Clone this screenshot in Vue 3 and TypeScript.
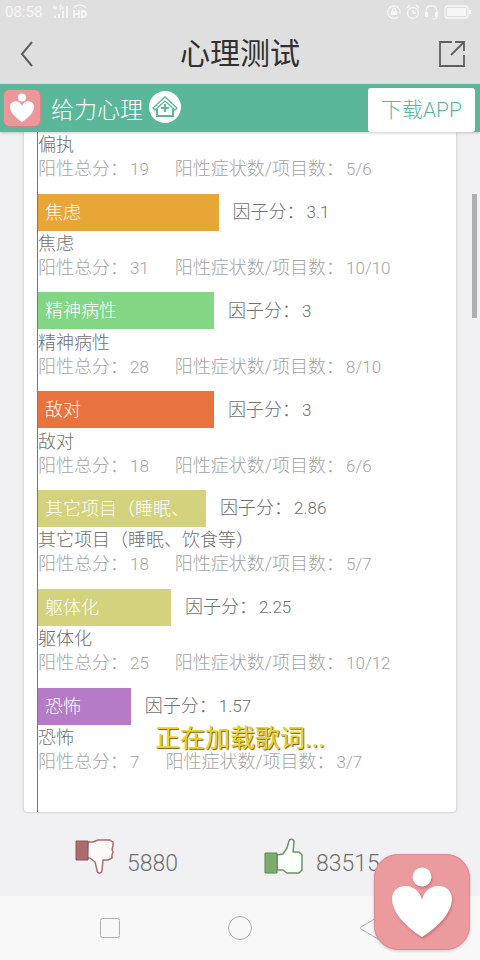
<script setup lang="ts">
interface Factor {
  name: string
  score: string
  total: number
  ratio: string
  color: string
  width: number
}

const factors: Factor[] = [
  { name: '焦虑', score: '3.1', total: 31, ratio: '10/10', color: '#e8a637', width: 43.2 },
  { name: '精神病性', score: '3', total: 28, ratio: '8/10', color: '#83d784', width: 42.1 },
  { name: '敌对', score: '3', total: 18, ratio: '6/6', color: '#e9733e', width: 42.1 },
  { name: '其它项目（睡眠、饮食等）', score: '2.86', total: 18, ratio: '5/7', color: '#d2d37c', width: 40.2 },
  { name: '躯体化', score: '2.25', total: 25, ratio: '10/12', color: '#d2d37c', width: 31.8 },
  { name: '恐怖', score: '1.57', total: 7, ratio: '3/7', color: '#b67bc7', width: 22.2 },
]
</script>

<template>
  <div class="page">
    <div class="status">
      <span class="clock">08:58</span>
      <svg class="signal" width="36" height="16" viewBox="0 0 36 16" aria-hidden="true">
        <g fill="none" stroke="#f6f6f6" stroke-width="1">
          <path d="M3 1L1 4h4M4 2v4M10 1H8v4h3V3H9" />
        </g>
        <path d="M2 12h2v2H2zM6 10h2v4H6zM10 7h2v7h-2zM14 2h2v12h-2z" fill="#f6f6f6" />
        <g fill="none" stroke="#f6f6f6" stroke-width="1.8">
          <path d="M22 6v8M27 6v8M22 10h5M30 7v6h1c4 0 4-6 0-6z" />
          <path d="M22 4c2-4 9-4 12 0" stroke-width="1.2" />
        </g>
      </svg>
      <svg class="system" width="86" height="16" viewBox="0 0 86 16" aria-hidden="true">
        <g fill="none" stroke="#f6f6f6" stroke-width="1.3">
          <path d="M12 13a6.3 6.3 0 1 1 2-3M6.5 7V6c0-2.500 3-2.500 3 0v1" />
          <circle cx="27" cy="9" r="5.500" />
          <path d="M27 6v3h3M21 4l3-3M33 4l-3-3" />
          <path d="M40 12V7c0-7 11-7 11 0v5c0 2-2 3-4 3" />
          <rect x="59" y="2" width="23" height="12" rx="3" />
        </g>
        <path d="M5 7h6v4H5zM39 8h3v5h-3zM49 8h3v5h-3zM61 4h19v8H61zM83 6h2v4h-2z" fill="#f6f6f6" />
      </svg>
    </div>

    <header class="titlebar">
      <button class="plain" type="button" aria-label="返回">
        <svg width="14" height="28" viewBox="0 0 14 28"><path d="M12 2L2 14l10 12" fill="none" stroke="#606060" stroke-width="2" /></svg>
      </button>
      <h1>心理测试</h1>
      <button class="plain" type="button" aria-label="分享">
        <svg width="28" height="28" viewBox="0 0 28 28"><path d="M14 2H2v24h24V15M13 15L26 2M17 2h9v9" fill="none" stroke="#606060" stroke-width="1.8" /></svg>
      </button>
    </header>

    <div class="banner">
      <svg width="38" height="40" viewBox="0 0 38 40" aria-hidden="true">
        <rect x="0.5" y="1.5" width="37" height="37" rx="6" fill="#eb989b" stroke="#cf8385" stroke-width="1" />
        <circle cx="19" cy="9.500" r="4" fill="#fff" />
        <path d="M19 34C11 29 7 23 7 19c0-7 10-8 12-1 2-7 12-6 12 1 0 4-4 10-12 15z" fill="#fff" />
      </svg>
      <span class="brand">给力心理</span>
      <svg class="home" width="34" height="34" viewBox="0 0 34 34" aria-hidden="true">
        <circle cx="17" cy="16" r="16" fill="#fff" />
        <g fill="none" stroke="#5bb79a" stroke-width="2">
          <path d="M5 17L17 6l12 11-2 2-10-9-10 9z" stroke-width="1.300" />
          <path d="M9 18v7h16v-7M17 13v8M13 17h8" />
        </g>
      </svg>
      <a class="download" href="#">下载APP</a>
    </div>

    <main class="card">
      <div class="chart">
        <section class="item lead">
          <p class="name">偏执</p>
          <p class="stats">
            <span>阳性总分：<span class="value">19</span></span>
            <span>阳性症状数/项目数：<span class="value">5/6</span></span>
          </p>
        </section>
        <section v-for="f in factors" :key="f.name" class="item">
          <div class="row">
            <div class="bar" :style="{ width: f.width + '%', background: f.color }">{{ f.name }}</div>
            <span class="score">因子分：<span class="value">{{ f.score }}</span></span>
          </div>
          <p class="name">{{ f.name }}</p>
          <p class="stats">
            <span>阳性总分：<span class="value">{{ f.total }}</span></span>
            <span>阳性症状数/项目数：<span class="value">{{ f.ratio }}</span></span>
          </p>
        </section>
      </div>
    </main>

    <div class="votes">
      <button class="plain vote" type="button" aria-label="踩 5880">
        <svg width="40" height="38" viewBox="0 0 40 38">
          <path d="M13 4h5l5-2h12l3 2v4l-1 3 1 3-1 3v3l-4 2h-5l-1 10c0 4-5 4-5 0l-2-8-5-4h-3z" fill="#fffafa" stroke="#a77073" stroke-width="1.500" stroke-linejoin="round" />
          <path d="M1 3h12v19H1z" fill="#aa6b6e" stroke="#8e5558" />
        </svg>
        <span>5880</span>
      </button>
      <button class="plain vote" type="button" aria-label="赞 83515">
        <svg width="40" height="38" viewBox="0 0 40 38">
          <path d="M13 17l6-1 4-6 2-7c1-3 5-2 5 1l-1 10h6l3 3v15l-3 3H23l-4-3h-6z" fill="#fafffa" stroke="#6b9566" stroke-width="1.500" stroke-linejoin="round" />
          <path d="M1 15h12v20H1z" fill="#7cad6d" stroke="#568650" />
        </svg>
        <span>83515</span>
      </button>
    </div>

    <nav class="navbar">
      <button class="plain" type="button" aria-label="最近任务">
        <svg width="24" height="24" viewBox="0 0 24 24"><rect x="2.500" y="2.500" width="19" height="19" rx="2" fill="none" stroke="#b0b0b0" /></svg>
      </button>
      <button class="plain" type="button" aria-label="主页">
        <svg width="26" height="26" viewBox="0 0 26 26"><circle cx="13" cy="13" r="11.500" fill="none" stroke="#b0b0b0" /></svg>
      </button>
      <button class="plain" type="button" aria-label="后退">
        <svg width="24" height="26" viewBox="0 0 24 26"><path d="M3 12L20 2q2-1 2 1v20q0 2-2 1L3 14q-2-1 0-2z" fill="none" stroke="#b0b0b0" /></svg>
      </button>
    </nav>

    <div class="thumb"></div>
    <div class="toast" role="status">正在加载歌词...</div>
    <button class="plain float" type="button" aria-label="给力心理">
      <svg width="96" height="96" viewBox="0 0 96 96">
        <rect width="96" height="96" rx="24" fill="#eb9a9e" />
        <rect x="0.500" y="0.500" width="95" height="95" rx="24" fill="none" stroke="#d98d91" />
        <g class="figure" fill="#fff">
          <circle cx="48" cy="23" r="9.500" />
          <path d="M48 83C29 71 18 57 18 45c0-17 26-18 30 1 4-19 30-18 30-1 0 12-11 26-30 38z" />
        </g>
      </svg>
    </button>
  </div>
</template>

<style>
body {
  margin: 0;
  background: #f1f1f3;
}
</style>

<style scoped>
.page {
  position: relative;
  display: flex;
  flex-direction: column;
  min-height: 100vh;
  overflow: hidden;
  background: #f1f1f3;
  color: #707070;
  font-family: Roboto, "Noto Sans CJK SC", sans-serif;
  font-size: 18px;
  font-weight: 300;
}
.plain {
  padding: 0;
  border: 0;
  background: none;
  color: inherit;
  font: inherit;
  cursor: pointer;
}
svg {
  display: block;
}
.status {
  display: flex;
  align-items: center;
  height: 24px;
  padding: 0 8px 0 5px;
  background: #dfdfdf;
}
.clock {
  color: #f6f6f6;
  font-size: 15px;
  font-weight: 400;
}
.signal {
  margin-left: 10px;
}
.system {
  margin-left: auto;
}
.titlebar {
  display: flex;
  align-items: center;
  justify-content: space-between;
  height: 60px;
  padding: 0 14px 0 20px;
  background: #dfdfdf;
}
h1 {
  margin: 0;
  padding-left: 8px;
  color: #303030;
  font-size: 30px;
  font-weight: 400;
  line-height: 60px;
}
.banner {
  position: relative;
  z-index: 1;
  display: flex;
  align-items: center;
  height: 48px;
  padding: 0 5px 0 3px;
  background: #5bb79a;
  box-shadow: 0 1px 3px rgba(0, 0, 0, 0.2);
}
.brand {
  margin-left: 10px;
  padding-top: 6px;
  color: #fff;
  font-size: 23px;
  line-height: 32px;
}
.home {
  margin-left: 5px;
}
.download {
  align-self: flex-end;
  margin: 0 0 0 auto;
  padding: 0 13px;
  border-radius: 3px;
  background: #fff;
  color: #5bb79a;
  font-size: 21px;
  line-height: 44px;
  text-decoration: none;
}
.card {
  display: flex;
  flex: 1;
  margin: 0 24px;
  padding-left: 13px;
  border-radius: 0 0 3px 3px;
  background: #fff;
  box-shadow: 0 0 3px rgba(0, 0, 0, 0.25);
}
.chart {
  display: flex;
  flex: 1;
  flex-direction: column;
  padding-bottom: 26px;
  border-left: 1px solid #777;
}
.item {
  flex: 1;
}
.lead {
  flex: none;
  padding-bottom: 12px;
}
.row {
  display: flex;
  align-items: center;
  gap: 14px;
  line-height: 37px;
}
.bar {
  box-sizing: border-box;
  height: 37px;
  padding-left: 7px;
  overflow: hidden;
  color: #fff;
}
.value {
  margin-left: 2px;
  font-size: 17px;
}
.name,
.stats {
  margin: 0;
  line-height: 24px;
}
.name {
  padding-top: 1px;
}
.stats {
  display: flex;
  gap: 26px;
  color: #a4a4a4;
}
.votes {
  display: grid;
  grid-template-columns: 1fr 1fr;
  height: 84px;
  padding: 0 27px 0 75px;
}
.vote {
  display: flex;
  align-items: center;
  gap: 12px;
  font-size: 23px;
}
.vote span {
  padding-top: 20px;
  line-height: 24px;
}
.vote svg {
  margin-top: 6px;
}
.navbar {
  display: grid;
  grid-template-columns: repeat(3, 1fr);
  height: 64px;
  padding: 0 45px;
  background: #f8f8f8;
}
.navbar svg {
  margin: 0 auto;
}
.thumb {
  position: absolute;
  top: 194px;
  right: 3px;
  width: 5px;
  height: 124px;
  background: #afafb2;
}
.toast {
  position: absolute;
  bottom: 205px;
  left: 0;
  right: 0;
  color: #ebd229;
  font-size: 25px;
  font-weight: 400;
  line-height: 32px;
  text-align: center;
  text-shadow: 1px 1px 1px #665b18;
}
.float {
  position: absolute;
  right: 10px;
  bottom: 10px;
  border-radius: 24px;
  box-shadow: 0 1px 3px rgba(0, 0, 0, 0.2);
}
.figure {
  filter: drop-shadow(1px 2px 1px rgba(150, 70, 80, 0.4));
}
</style>
